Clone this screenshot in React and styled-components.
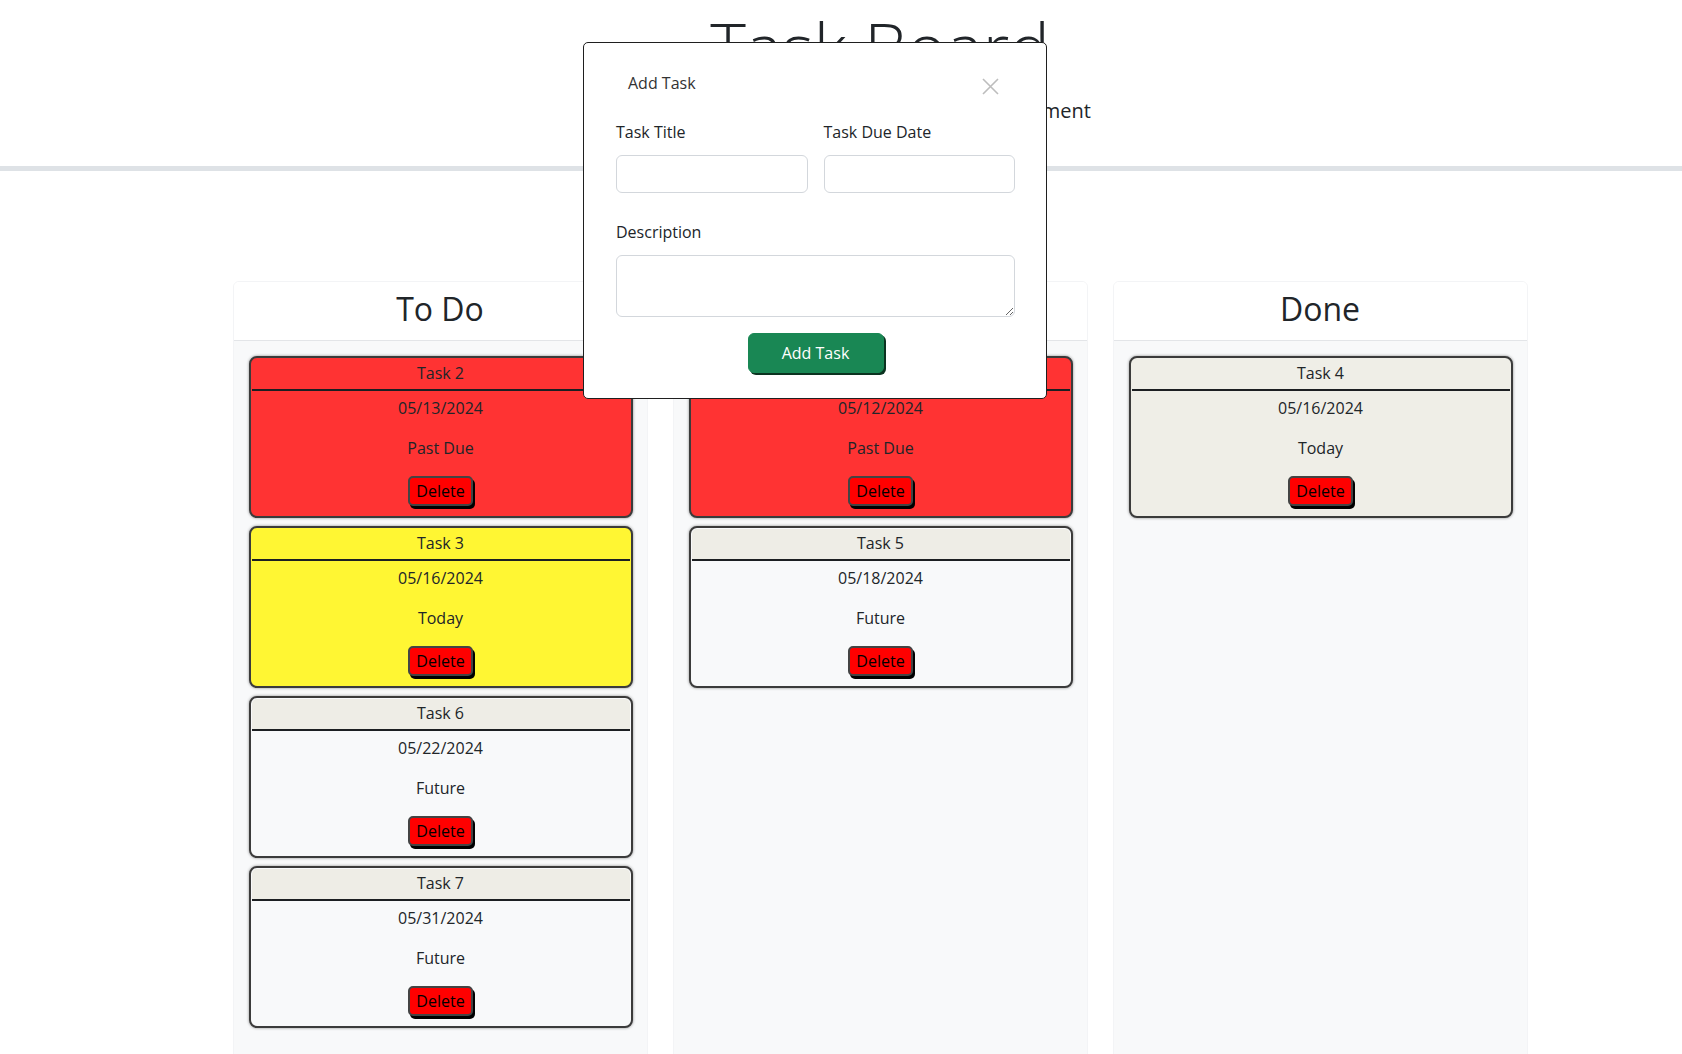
import React from 'react';
import styled, { createGlobalStyle } from 'styled-components';

const GlobalStyle = createGlobalStyle`
  *, *::before, *::after {
    box-sizing: border-box;
  }

  html, body {
    margin: 0;
    overflow-x: hidden;
  }

  body {
    font-family: 'Open Sans', 'Liberation Sans', sans-serif;
    font-size: 16px;
    line-height: 1.5;
    color: #212529;
    background: #fff;
  }
`;

const tones = {
  past: { head: '#ff3333', body: '#ff3333' },
  today: { head: '#fff633', body: '#fff633' },
  future: { head: '#eeede6', body: '#f8f9fa' },
  done: { head: '#efeee7', body: '#efeee7' },
};

const lanes = [
  {
    title: 'To Do',
    tasks: [
      { title: 'Task 2', date: '05/13/2024', status: 'Past Due', tone: 'past' },
      { title: 'Task 3', date: '05/16/2024', status: 'Today', tone: 'today' },
      { title: 'Task 6', date: '05/22/2024', status: 'Future', tone: 'future' },
      { title: 'Task 7', date: '05/31/2024', status: 'Future', tone: 'future' },
    ],
  },
  {
    title: 'In Progress',
    tasks: [
      { title: 'Task 1', date: '05/12/2024', status: 'Past Due', tone: 'past' },
      { title: 'Task 5', date: '05/18/2024', status: 'Future', tone: 'future' },
    ],
  },
  {
    title: 'Done',
    tasks: [{ title: 'Task 4', date: '05/16/2024', status: 'Today', tone: 'done' }],
  },
];

const Page = styled.div`
  position: relative;
  width: 1760px;
  min-height: 1054px;
`;

const Header = styled.header`
  height: 171px;
  padding-top: 6px;
  border-bottom: 5px solid #dee2e6;
  text-align: center;
`;

const Title = styled.h1`
  margin: 0 0 8px;
  font-size: 68px;
  font-weight: 300;
  line-height: 1.2;
`;

const Lead = styled.p`
  margin: 0;
  font-size: 20px;
  font-weight: 400;
`;

const Toolbar = styled.div`
  display: flex;
  justify-content: center;
  margin: 24px 0 46px;
`;

const GreenButton = styled.button`
  width: 136px;
  height: 40px;
  padding: 0;
  font: inherit;
  color: #fff;
  background: #198754;
  border: 1px solid #198754;
  border-radius: 6px;
  box-shadow: 2px 2px 0 #0b3320;
  cursor: pointer;
`;

const Lanes = styled.main`
  display: grid;
  grid-template-columns: repeat(3, 415px);
  justify-content: center;
  gap: 25px;
`;

const Lane = styled.section`
  display: flex;
  flex-direction: column;
  min-height: 790px;
  border: 1px solid #f3f4f6;
  border-radius: 6px;
  overflow: hidden;
  text-align: center;
`;

const LaneHeader = styled.div`
  padding: 8px 16px;
  background: #fff;
  border-bottom: 1px solid #e3e5e8;
`;

const LaneTitle = styled.h2`
  margin: 0 0 4px;
  font-size: 32px;
  font-weight: 500;
  line-height: 1.2;
`;

const LaneBody = styled.div`
  flex: 1;
  display: flex;
  flex-direction: column;
  gap: 8px;
  padding: 15px 14px 16px 15px;
  background: #f8f9fa;
`;

const Card = styled.article`
  padding: 1px;
  border: 2px solid #3b3b3b;
  border-radius: 8px;
  background: ${({ $tone }) => tones[$tone].body};
  box-shadow: 0 0 3px rgba(0, 0, 0, 0.45);
`;

const CardHeader = styled.div`
  padding: 2px 0 4px;
  line-height: 24px;
  background: ${({ $tone }) => tones[$tone].head};
  border-bottom: 2px solid #1c1f22;
  border-radius: 5px 5px 0 0;
`;

const CardBody = styled.div`
  padding: 5px 16px 9px;
`;

const CardText = styled.p`
  margin: 0 0 16px;
  line-height: 24px;
`;

const DeleteButton = styled.button`
  padding: 1px 6px;
  font: inherit;
  line-height: 24px;
  color: #000;
  background: #ff0000;
  border: 2px solid #444;
  border-radius: 5px;
  box-shadow: 2px 3px 0 #000;
  cursor: pointer;
`;

const Dialog = styled.div`
  position: absolute;
  left: 583px;
  top: 42px;
  width: 464px;
  height: 357px;
  padding: 0 31px 0 32px;
  background: #fff;
  border: 1px solid #1f1f1f;
  border-radius: 5px;
`;

const TitleBar = styled.div`
  display: flex;
  align-items: flex-start;
  justify-content: space-between;
  height: 52px;
  padding: 28px 16px 0 12px;
`;

const DialogTitle = styled.span`
  line-height: 24px;
  color: #333;
`;

const CloseButton = styled.button`
  display: flex;
  width: 17px;
  height: 17px;
  margin-top: 7px;
  padding: 0;
  background: none;
  border: 0;
  cursor: pointer;
`;

const Form = styled.form`
  display: flex;
  flex-direction: column;
  align-items: center;
  padding-top: 25px;
`;

const FieldRow = styled.div`
  display: grid;
  grid-template-columns: 1fr 1fr;
  gap: 16px;
  width: 100%;
`;

const Field = styled.div`
  width: 100%;
  margin-top: ${({ $top }) => $top || 0}px;
`;

const Label = styled.label`
  display: block;
  margin-bottom: 11px;
  line-height: 24px;
`;

const Input = styled.input`
  display: block;
  width: 100%;
  height: 38px;
  padding: 6px 12px;
  font: inherit;
  border: 1px solid #d3d7dc;
  border-radius: 6px;
`;

const TextArea = styled.textarea`
  display: block;
  width: 100%;
  height: 62px;
  padding: 6px 12px;
  font: inherit;
  border: 1px solid #d3d7dc;
  border-radius: 6px;
`;

const SubmitButton = styled(GreenButton)`
  margin-top: 16px;
`;

const TaskCard = ({ task }) => (
  <Card $tone={task.tone}>
    <CardHeader $tone={task.tone}>{task.title}</CardHeader>
    <CardBody>
      <CardText>{task.date}</CardText>
      <CardText>{task.status}</CardText>
      <DeleteButton type="button">Delete</DeleteButton>
    </CardBody>
  </Card>
);

const App = () => (
  <>
    <GlobalStyle />
    <Page>
      <Header>
        <Title>Task Board</Title>
        <Lead>A simple Kanban board for task management</Lead>
      </Header>
      <Toolbar>
        <GreenButton type="button">Add Task</GreenButton>
      </Toolbar>
      <Lanes>
        {lanes.map((lane) => (
          <Lane key={lane.title}>
            <LaneHeader>
              <LaneTitle>{lane.title}</LaneTitle>
            </LaneHeader>
            <LaneBody>
              {lane.tasks.map((task) => (
                <TaskCard key={task.title} task={task} />
              ))}
            </LaneBody>
          </Lane>
        ))}
      </Lanes>

      <Dialog role="dialog" aria-label="Add Task">
        <TitleBar>
          <DialogTitle>Add Task</DialogTitle>
          <CloseButton type="button" aria-label="Close">
            <svg width="17" height="17" viewBox="0 0 17 17">
              <path d="M1 1L16 16M16 1L1 16" stroke="#bdbdbd" strokeWidth="1.6" />
            </svg>
          </CloseButton>
        </TitleBar>
        <Form>
          <FieldRow>
            <Field>
              <Label htmlFor="task-title">Task Title</Label>
              <Input id="task-title" type="text" />
            </Field>
            <Field>
              <Label htmlFor="task-date">Task Due Date</Label>
              <Input id="task-date" type="text" />
            </Field>
          </FieldRow>
          <Field $top={27}>
            <Label htmlFor="task-desc">Description</Label>
            <TextArea id="task-desc" />
          </Field>
          <SubmitButton type="button">Add Task</SubmitButton>
        </Form>
      </Dialog>
    </Page>
  </>
);

export default App;
